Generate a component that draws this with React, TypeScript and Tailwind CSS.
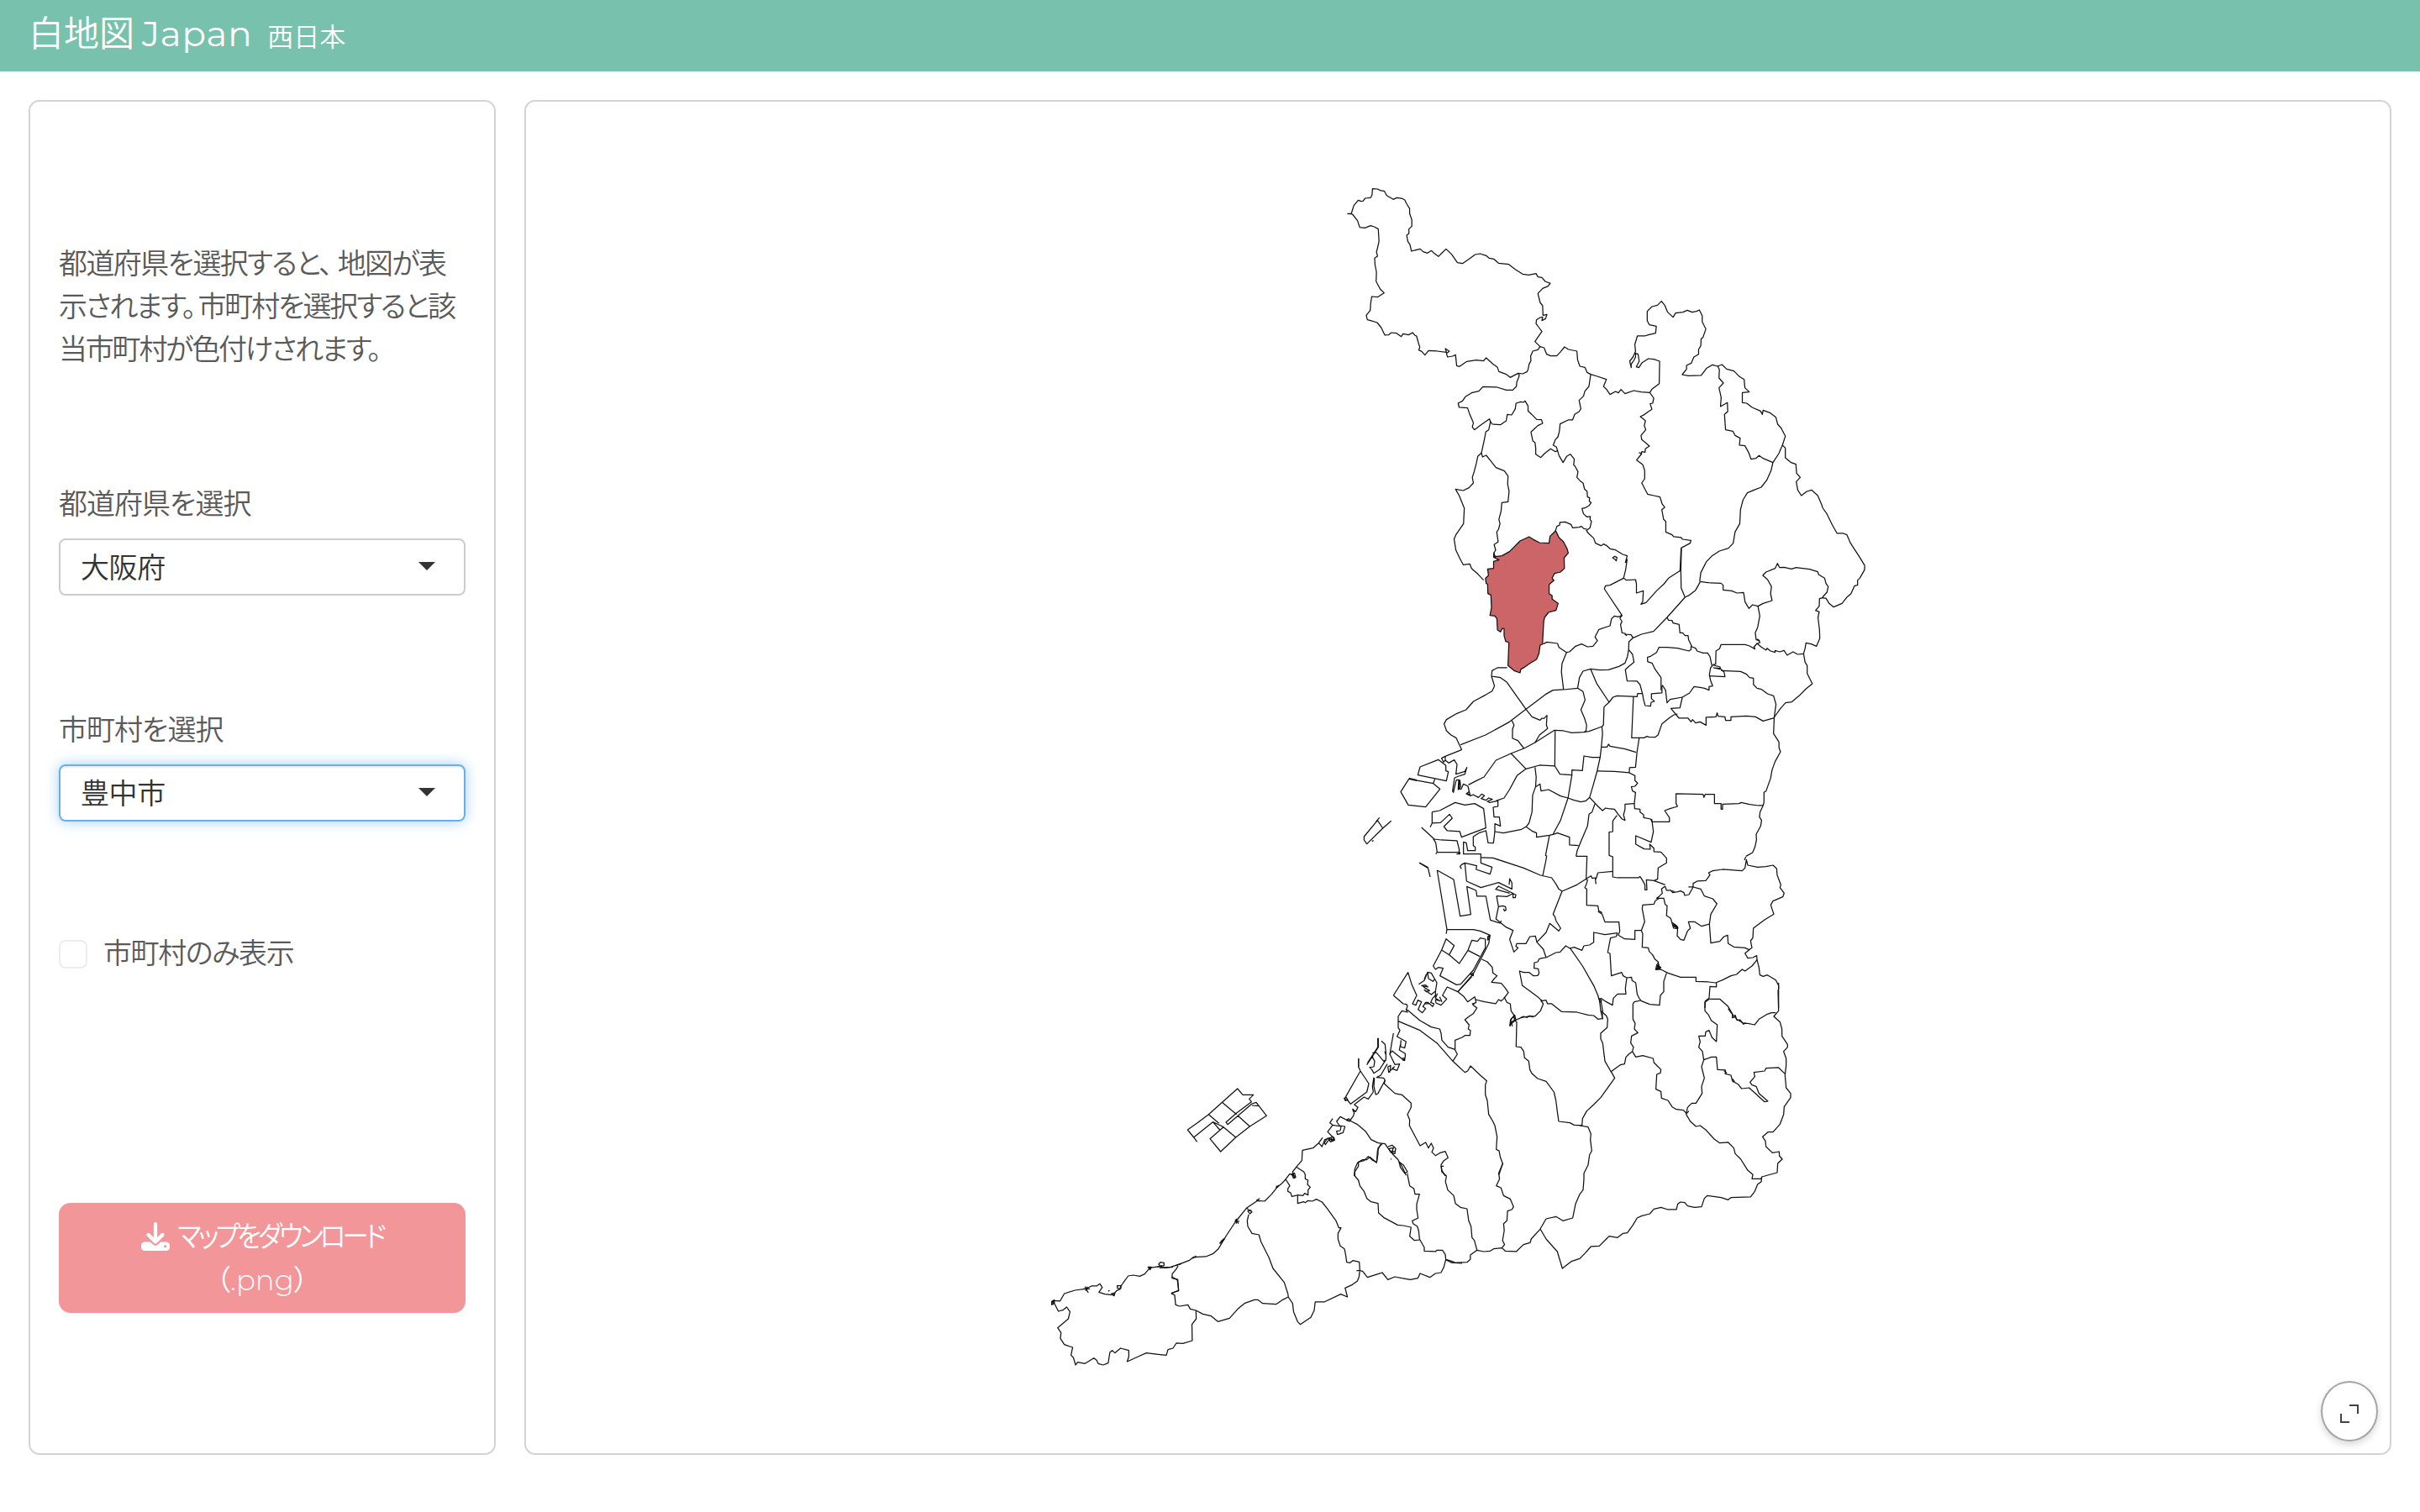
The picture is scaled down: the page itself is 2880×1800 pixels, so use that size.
import type { ReactNode } from "react";
import { FaDownload } from "react-icons/fa6";

type Sheet = { matrix: string; paths: string[] };

/* Survey sheets: each one holds border lines in its own local grid. */
const sheets: Sheet[] = [
  {
    matrix: "matrix(0.43367 0 0 0.33333 1580 200)",
    paths: [
      "M55 163 65 163 68 150 72 134 84 115 92 119 97 118 103 108 118 106 122 96 123 74 137 75 144 80 156 83 162 98 180 112 190 106 205 109 212 115 216 126 225 145 225 162 231 185 231 208 223 218 223 234 217 240 220 262 226 274 230 297 242 293 254 289 262 299 274 304 285 295 290 302 304 316 314 303 325 289 340 308 356 338 370 341 386 327 405 309 418 306 435 313 443 322 456 325 469 340 497 344 515 362 535 379 552 382 572 377 577 389 588 391 597 405 611 412 605 422 590 430 577 448 583 480 590 492 591 526 602 523 598 538 588 545 590 532 583 534 573 542 572 556 580 570 588 584 577 604 569 620 583 638 577 649 563 654 557 672 558 688 553 700 550 720 547 728 535 735 523 733 513 740 501 748 489 736 470 727 466 712 452 698 435 678 428 689 408 686 382 691 362 709 354 706 351 667 343 672 329 675 326 662 334 655 323 645 326 658 300 654 277 652 267 668 258 655 250 650 253 640 249 624 244 600 240 598 233 588 222 596 207 592 202 602 189 590 175 588 167 596 157 597 147 570 136 552 118 545 109 542 106 526 117 508 118 484 121 459 137 461 155 446 144 432 133 405 134 372 130 345 129 322 137 315 134 300 137 285 141 262 139 218 128 210 118 206 102 214 88 212 82 188 68 165Z",
      "M583 638 594 642 601 665 612 671 629 671 640 655 650 639 661 648 684 654 686 685 692 708 706 712 712 730 722 737 740 744 765 755 757 780 765 790 775 809 790 798 798 803 805 791 816 806 840 795 860 800 884 802",
      "M523 733 526 742 519 765 518 780 508 793 490 793 465 783 426 781 415 797 395 803 378 817 370 832 358 840 361 855 384 857 390 880 400 910 397 925 403 935 413 925 421 917 444 896 447 906 442 935 434 942 430 970 422 1018",
      "M447 906 452 915 474 917 490 903 493 880 505 882 515 860 517 840 530 835 537 837 542 832 550 850 550 868 560 880 574 898 587 899 590 912 577 920 558 943 563 975 569 980 571 1000 571 1022 585 1034 595 1020 612 1003 625 1013 631 1010 628 997 619 990 625 970 632 960 636 940 638 914 660 900 672 900 678 880 690 870 695 860 690 830 702 815 706 797 717 780 722 737",
      "M631 1010 635 1027 646 1052 656 1030 666 1022 677 1040 675 1060 679 1065 687 1085 684 1105 695 1120 701 1125 705 1147 712 1155 713 1175 719 1178 718 1190 723 1195 718 1205 708 1213 698 1216 702 1235 711 1246 721 1245 720 1255 724 1262 720 1285 710 1295 716 1305 730 1322 735 1340 750 1349 757 1343 765 1348 775 1360 790 1364 810 1380 822 1385 817 1410",
      "M422 1018 412 1030 408 1055 402 1085 397 1105 400 1125 388 1142 372 1152 351 1147 361 1170 375 1215 373 1270 352 1310 347 1325 352 1365 363 1395 372 1417 390 1414 395 1430 412 1450 428 1472",
      "M422 1018 425 1032 435 1026 447 1045 462 1070 485 1082 495 1100 494 1130 498 1155 495 1192 478 1195 476 1225 470 1255 473 1270 469 1290 464 1300 468 1335 457 1345 461 1365 456 1375 460 1392",
      "M625 1297 629 1280 637 1275 637 1266 652 1264 668 1273 672 1285 690 1283 697 1280 703 1288 712 1290",
      "M884 802 895 822 892 840 885 842 890 862 880 870 870 880 858 888 868 898 872 903 869 920 873 935 860 955 862 970 883 993 872 1003 871 1015 862 1013 860 1020 855 1017 862 1020 848 1043 865 1060 870 1080 870 1110 862 1125 878 1165 895 1170 912 1175 918 1200 925 1212 917 1220 922 1255 928 1262 928 1300 945 1310 950 1317 970 1320 974 1326 997 1330 995 1340 970 1357 967 1440",
      "M884 802 890 790 910 770 911 690 895 683 880 681 863 695 854 713 847 710 855 690 852 665 845 662 845 675 840 688 833 700 833 713 829 690 838 675 845 655 843 630 850 600 870 600 880 596 900 590 902 565 883 560 877 545 877 512 890 495 905 490 916 476 925 490 933 515 948 533 955 518 975 515 987 508 1000 515 1012 512 1020 507 1028 528 1028 550 1038 575 1030 605 1025 610 1024 635 1018 648 1018 665 1005 675 998 697 985 705 985 718 973 738 990 742 1025 741 1040 715 1056 703 1070 708 1082 702 1095 718 1115 725 1130 745 1143 755 1145 785 1157 800 1138 802 1138 838 1150 840 1165 855 1188 868 1193 880 1195 865 1215 875 1230 890 1235 915 1245 930 1256 958 1248 990",
      "M1070 706 1075 720 1074 750 1086 768 1074 785 1080 820 1078 852 1097 838 1098 870 1089 880 1092 935 1112 940 1118 955 1132 965 1130 990 1145 992 1155 1015 1162 1040 1175 1037 1184 1027 1195 1037 1222 1052",
      "M1248 990 1238 1020 1222 1052 1217 1080 1205 1115 1190 1140 1170 1150 1152 1160 1140 1185 1133 1220 1131 1270 1118 1300 1113 1340 1100 1358 1075 1368 1055 1385 1040 1405 1030 1430 1024 1445 1021 1477",
      "M1248 990 1256 1000 1256 1035 1272 1052 1285 1058 1287 1090 1297 1105 1286 1120 1290 1150 1300 1170 1315 1155 1328 1150 1345 1170 1355 1200 1359 1215 1370 1235 1385 1275 1398 1305 1415 1305 1425 1310 1435 1340 1445 1360 1460 1390 1474 1420",
      "M782 1392 788 1387 794 1391 792 1403 788 1397Z",
    ],
  },
  {
    matrix: "matrix(0.35714 0 0 0.33333 1700 580)",
    paths: [
      "M1454 280 1453 295 1440 320 1437 325 1430 332 1430 350 1420 352 1408 380 1395 392 1378 415 1350 428 1335 415 1325 397 1313 395 1303 398 1302 425 1290 440 1302 445 1298 465 1303 510 1304 540 1293 568 1275 560 1258 556 1255 575 1250 595 1255 625 1262 637 1262 665 1279 702 1258 720 1235 745 1210 767 1190 770 1173 790 1152 822",
      "M906 337 940 342 975 343 982 350 982 367 1010 370 1028 378 1050 376 1055 410 1068 433 1080 420 1098 425 1115 415 1145 405 1140 380 1143 355 1130 330 1114 315 1125 303 1155 290 1163 272 1170 287 1185 286 1210 292 1225 287 1270 293 1297 302 1300 312 1320 325 1325 345 1332 355 1328 375 1313 393",
      "M1098 425 1104 460 1097 500 1089 520 1092 545 1103 548 1097 543 1105 555 1095 558 1108 570 1125 582 1128 575 1140 585 1155 590 1155 583 1170 588 1185 583 1195 600 1215 588 1230 597 1250 595",
      "M1095 558 1085 570 1088 578 1070 567 1055 562 975 562 970 577 958 585 957 632 947 635",
      "M906 337 890 368 870 385 855 393 795 465 750 515 710 525 682 538 668 552 667 580 663 605 655 628 635 640 600 652 570 653 540 649 515 657 503 680 497 718",
      "M667 580 680 597 685 625 668 640 656 652 662 692 695 693 705 705 713 737 717 760 722 780 740 782 742 768 753 765 743 755 743 738 778 735 778 710 780 708 790 725 795 770 805 758 846 750",
      "M602 768 615 750 628 745 695 748 697 737 713 737",
      "M846 750 870 735 885 712 905 715 920 718 935 725 935 712 947 710 940 690 936 670 940 645 945 640 938 605 930 592 915 592 895 585 890 575 878 570 867 545 865 530 855 530 847 520 838 520 835 490 815 485 812 476 800 475 795 465",
      "M875 568 875 580 868 585 830 575 795 572 768 572 760 590 738 605 730 607 730 622 735 625 745 628 755 650 775 680 775 725",
      "M947 635 972 642 972 650 950 645 972 647 985 660 988 677 936 674",
      "M975 655 1040 658 1060 668 1070 680 1083 682 1083 705 1095 718 1110 722 1130 738 1150 745 1158 775 1152 822",
      "M846 750 838 788 808 790 835 825 865 825 875 838 880 830 890 842 905 838 925 850 925 822 958 820 962 806 965 818 988 820 990 833 1008 833 1008 820 1060 817 1090 820 1115 835 1152 824",
      "M830 810 818 813 805 822 790 835 778 845 765 885 755 893 735 892 728 890 718 895 702 895 677 895 683 748",
      "M602 768 585 785 583 850 578 855 580 880 576 928 595 928 600 918 605 925 655 935 692 947",
      "M702 897 695 945 690 1000 670 1002 669 1020 620 1015 562 1014",
      "M576 928 572 965 562 1014 550 1060 537 1108 525 1120 508 1124 485 1118 465 1110 440 1103 400 1080 375 1085 372 1060 357 1070",
      "M669 1020 688 1030 688 1048 697 1057 688 1068 676 1070 680 1085 690 1090 686 1130 687 1148 705 1150 705 1160 717 1170 717 1180 740 1185 745 1195 803 1195 803 1180 787 1155 805 1148 830 1140 825 1130 825 1095 915 1097 918 1108 922 1097 953 1097 953 1130 975 1130 975 1150 980 1150 980 1132 1035 1130 1042 1126 1070 1133 1100 1137 1115 1137",
      "M1152 822 1150 880 1168 910 1168 930 1173 945 1155 980 1145 1010 1140 1040 1125 1085 1118 1090 1118 1125 1115 1137 1105 1160 1103 1178 1110 1190 1107 1210 1092 1240 1093 1260 1088 1285 1080 1305 1058 1318",
      "M686 1130 655 1132 655 1150 650 1170 655 1190 645 1185 632 1168 620 1150 600 1148 590 1146 580 1155 565 1140 537 1108",
      "M555 1130 545 1160 535 1168 530 1210 510 1260 495 1300 492 1318",
      "M656 270 662 258 657 295 650 325 660 332 690 330 693 345 693 378 716 370 714 408 708 418 725 412 760 370 785 345 800 325 840 297",
      "M843 220 841 297 842 360 855 393",
      "M650 325 605 350 590 352 586 363 645 458 638 468 645 480 640 490 645 520 655 522 660 530 655 525 675 527 682 538",
      "M645 458 632 463 620 460 610 470 605 495 568 508 555 535 563 548 548 568 530 570 510 560 490 568 470 588 460 590",
      "M382 560 395 553 430 558 435 572 460 590 445 630 443 660 450 722",
      "M262 645 230 645 212 655 210 675 220 710 212 728 190 742 150 765 125 795 95 808 60 830 52 845 60 870 75 885 92 895 111 938",
      "M210 675 240 680 260 695 325 793 345 820 372 832 378 825 385 826 395 815 393 850 397 862 370 885 355 912",
      "M107 920 190 885 270 838 325 793 390 740 415 725 450 723 497 718 515 730 522 760 508 795 520 825 527 850 525 870 518 875",
      "M278 833 285 850 280 865 280 897 298 905 318 933",
      "M133 1063 160 1048 185 1035 225 975 275 951 318 933 355 912 420 868 450 870 478 877 518 875 535 872 578 855",
      "M422 868 421 996 438 1025 478 1028 478 1010 513 1012 518 960 545 965 572 965",
      "M275 951 325 1006 370 993 421 996",
      "M355 1000 359 1035 357 1070 347 1100 345 1160 335 1200 325 1213",
      "M540 649 560 700 602 768",
      "M478 1028 465 1110 440 1190 430 1210 415 1240",
      "M325 1006 295 1030 270 1080 252 1110 225 1120",
      "M325 1213 345 1228 360 1235 360 1250 403 1243 415 1240 430 1235 470 1250 470 1278 500 1280",
      "M325 1213 310 1222 250 1235 220 1230",
    ],
  },
  {
    matrix: "matrix(0.33333 0 0 0.33333 1600 840)",
    paths: [
      "M418 158 358 182 347 188 354 202 360 195 360 182M270 219 335 193 362 214 362 233 371 236 364 269 262 248Z",
      "M360 195 372 205 392 194 402 210 398 245 430 235 437 221 430 245 408 252 393 258 386 305 389 310 398 270 401 265 408 265 406 300 415 290 412 265M411 265 409 298 417 298 425 280 441 288",
      "M441 288 448 318 438 315 444 308 435 315 450 322 460 318 478 328 490 316 500 322 488 332 505 338 515 330 528 335 510 342 518 346 548 340 548 360 531 363 534 398 553 398 557 430 537 422 537 450 532 491 513 490 505 445",
      "M230 262 317 278 341 298 290 362 228 355 201 308ZM230 259 258 266M231 262 258 268M317 278 323 262",
      "M70 468 118 410 137 438 80 494 70 480ZM112 415 125 400M137 438 167 412M98 484 104 482",
      "M275 435 321 477 345 480 402 483 410 515 408 528M317 475 326 490 331 524 412 524 412 530 400 530M331 524 326 530",
      "M313 380 340 375 395 346 430 355 465 350 497 368 505 437 418 470 412 450 367 447 355 432 385 402 375 388 343 418 313 420 306 434M313 380 313 420",
      "M505 447 480 455 460 468 460 500 467 505 467 518 440 518 435 490 425 487 425 530 487 530 487 562 527 577 520 602 470 585 472 572 430 562 418 568 413 575 418 583M430 562 436 627 487 650 550 632 598 655 598 633 590 618 588 640",
      "M487 543 530 544 640 580 700 606 740 615 757 640 765 655 777 663",
      "M605 672 550 645 540 656 590 670M543 680 580 682 600 672 612 675 610 686 602 686 602 674M543 680 550 718 541 762 575 790 602 803 590 835 605 880 620 865 612 860 615 850 648 850 662 825 682 823 687 845 710 870 720 900",
      "M550 718 565 715 575 718 577 730 571 733 568 725",
      "M268 561 298 578 306 612M267 562 297 580",
      "M331 588 390 621 413 752 451 746 437 646 470 660 473 681 505 681 521 766 555 777 560 768",
      "M331 588 366 800 363 815M366 800 460 800 485 805 520 820 515 850 500 880 460 958 405 1022M512 825 516 822 516 835 511 837Z",
      "M363 833 392 857 374 890 410 921 441 874 455 838 475 842 485 830 503 834 503 865 460 945 415 995 400 997 341 965 352 938 335 935 325 942 317 930 347 873ZM347 873 374 890M441 874 483 896",
      "M687 845 720 810 733 778 765 805 772 795 755 768 752 755 745 745 777 663",
      "M777 663 830 640 880 608 885 617 895 615 898 637M898 620 905 597 958 592",
      "M732 463 718 535 722 538 718 560 708 607",
      "M827 538 866 538 863 620 868 623 863 640 858 650 865 655 865 713 905 715 908 733 920 740",
      "M958 592 958 540 945 535 945 452 958 450 958 412 973 392",
      "M720 900 755 882 770 880 790 858 805 867 820 863 848 874 855 858 875 855 890 845 890 810 930 818 975 812",
      "M720 900 705 902 695 905 690 915 678 918 677 938 692 940 695 955 690 964 675 965 660 953 640 953 625 948 635 1000 670 1025 690 1040 705 1055",
      "M805 865 850 930 890 1000 905 1035 912 1060",
    ],
  },
  {
    matrix: "matrix(0.33333 0 0 0.33333 1900 840)",
    paths: [
      "M58 592 58 612 75 615 150 615 155 610 165 625 173 640 173 658 180 658 178 622 205 625 245 640M205 625 218 620 220 580 250 562 250 545 230 523 205 522 205 510 190 495 192 513 170 512 140 495 140 465 195 488 203 450 197 405",
      "M245 645 232 655 235 670 225 680 215 688 240 688 245 710 252 715 250 750 265 760 275 795 290 797 278 785 290 790 288 822 300 835 312 838 325 805 335 795 328 772 350 772 375 788 403 780",
      "M245 645 250 660 265 660 272 668 290 665 300 662 312 668 315 678 330 675 345 648 372 655 385 680 415 690 430 708 408 745 403 780 408 848 440 842 455 825 468 820 470 850 490 862 530 865 545 872 530 885 540 902 558 900 572 893 573 910",
      "M345 648 345 635 360 627 390 625 405 605 400 597 415 590 450 585 480 587 520 590 530 580 535 550 540 570 575 577 605 575 630 570 643 582 645 605 658 640 655 650 670 670 665 683 630 698 622 712 633 745 600 765 560 795 558 830 550 840 555 865 545 872",
      "M225 688 210 697 205 709 165 712 163 725 172 772 160 803 165 815 163 863 185 865 188 878 200 890 208 905 220 915 222 925 212 943 228 942 220 920 225 940 235 945 255 955 300 970 355 970 355 985 400 987 425 990 450 980 480 965 500 960 520 942 530 948 555 930 573 908 580 935 583 962 595 967 610 962 640 980 650 1000 650 1080",
      "M160 803 137 803 137 835 100 833 78 820 83 805 80 773 30 773 20 745 5 735",
      "M75 812 70 825 50 830 45 855 40 882 48 885 53 965 90 953 95 965 108 972 103 1010 105 1030 75 1030 60 1045 57 1070 35 1058 15 1045",
      "M108 972 125 970 127 982 140 990 145 1030 152 1045 160 1055 190 1067 225 1070 228 1035 240 1022 240 985 250 955",
      "M428 990 428 1005 405 1003 402 1045 388 1055 387 1080",
      "M533 540 528 552M270 775 285 785 290 795 278 790 272 782 288 788M218 918 222 935 215 942 230 935 218 930M268 662 278 664M328 648 345 648",
    ],
  },
  {
    matrix: "matrix(0.33333 0 0 0.33333 1580 1080)",
    paths: [
      "M550 186 570 195 588 215 590 235 605 245 595 255 585 268 620 272 635 290 645 305 630 325 620 335 610 330 600 345 560 338 528 330 530 340 518 348 533 360 520 380 505 390 490 402 505 420 502 435 510 440 508 458 490 458 480 465 455 475 455 510 463 525 447 550",
      "M630 320 640 340 652 345 655 370 665 385 668 405 675 410 673 498 690 500 700 515 703 538 718 550 722 580 730 595 750 612 780 622 808 660 815 690 820 730 825 765 865 770 880 778 910 780",
      "M652 425 655 400 665 388 668 402 655 412 660 425M668 405 690 395 715 390 740 390 760 370 770 345 762 335 765 330",
      "M650 425 653 402 668 385 672 402 652 420M515 345 528 342M690 394 700 390 712 394 722 388 735 393",
      "M765 335 780 332 785 345 800 345 835 373 890 375 930 385 950 387 965 400 980 398 982 370 975 330",
      "M283 365 330 405 370 428 400 435 405 450 408 475 430 500 455 508",
      "M252 407 330 440 390 485 447 550 490 590 500 585 510 567 545 600 568 620 563 635 563 670 570 690 575 740 590 765 597 780 605 820 602 865 612 870 617 895 625 915 620 930 612 955",
      "M235 315 287 233 300 275 318 315 303 345 315 350 322 332 335 338 323 365 338 377 350 362 340 355 350 340 358 340 375 355 380 345 368 340 375 325 385 315M345 345 365 345",
      "M235 315 270 345 282 347 285 355 280 365 285 375 265 370 252 390 252 430 258 440 248 462 280 480 275 503 260 498 262 475M260 490 256 510 277 523 277 535 272 547 230 513 222 525 228 490 235 450M267 540 276 540 275 548 268 546Z",
      "M325 275 345 262 357 232 370 235 390 270 385 300 370 312 345 295 352 302 364 298 350 290 340 282 358 285 350 278 334 280M357 232 360 255 376 265 383 255M345 258 352 240",
      "M392 308 385 325 402 335 385 330 387 342 405 350 425 328 410 315 427 285 465 302 485 318 500 338 525 320 528 330M400 320 408 338M385 300 385 325",
      "M465 302 515 248M510 240 520 235 520 245Z",
      "M222 525 240 562 257 560 248 583 230 577 238 570 218 590 215 570 225 565 222 590",
      "M181 467 181 500 140 563M179 467 179 500 142 557M192 478 205 490 208 520 208 545 200 550 175 520 160 520M204 515 207 525M166 520 160 535 168 550 165 570 150 572 158 580 165 593 185 580 208 545",
      "M111 540 111 572 117 585 147 630 140 660 82 703 72 690 60 685 117 585M110 540 110 572M59 682 67 680 72 688 63 691Z",
      "M95 705 130 678 145 685 163 660 160 640 165 608M172 670 165 640 167 610M172 670 180 665 205 618 200 610 175 608 190 600 213 560",
      "M205 618 202 630 215 642 240 665 265 670 298 700 298 715 285 740 293 760 292 780 305 805 330 852 350 840 360 860 370 843 378 860 372 875 385 887 400 878 420 872 430 895 415 905 405 920 408 940 420 960",
      "M95 705 108 715 100 730 90 725 95 735 92 745 85 755 78 765 68 760 75 755 85 765 105 775 135 800 155 830 180 842 205 845 215 860 235 885 250 900 265 925 280 958",
      "M215 855 230 850 243 862 240 880 225 875 218 862 235 860 228 875 243 868M255 910 270 920 285 945 275 950 260 930Z",
      "M195 845 180 860 180 880 175 912 150 892 140 902 125 902 107 912 97 935 95 960",
    ],
  },
  {
    matrix: "matrix(0.33333 0 0 0.33333 1880 1080)",
    paths: [
      "M218 333 195 338 190 345 190 400 198 415 195 435 208 448 195 455 185 460 182 485 192 500 188 515",
      "M463 328 447 340 447 370 460 385 470 405 491 420 488 480 472 465 462 440 450 445 448 460 425 460 430 480 425 500 438 515 443 545 470 535 488 535 492 580 520 582 520 595 540 600 545 620 565 632 578 648 605 645 660 695 672 693 640 665 630 640 615 635 608 625 625 605 622 590 660 585 665 575 710 573 733 595",
      "M463 328 500 328 530 355 540 372 550 390 555 385 560 400 585 415 600 415 625 420 640 400 670 382 685 377 700 377",
      "M530 362 538 374 545 382 545 395 555 392 562 404 572 402 585 418 592 412M515 584 524 590 518 596M545 612 552 622 545 624",
      "M710 270 710 290 708 300 710 370 693 390 715 410 722 435 722 460 742 490 742 500 728 515 737 540 737 565 733 600 737 645 753 665 753 680 730 713 728 740 715 775 690 803 672 803 653 820 663 835 665 855 688 877 712 873 713 888 723 900 707 915 705 948 650 963 648 970 615 970 618 955 600 940 575 900 555 880 550 860 530 840 500 842 480 828 450 795 430 780 415 783 395 765 380 740 385 715 400 700 415 700 437 665 435 640 445 610 435 570 443 545",
      "M188 515 200 535 225 530 262 540 265 555 290 580 288 592 275 597 272 650 290 658 292 682 315 690 330 713 345 722 370 725 380 735",
      "M188 515 175 525 165 535 160 560 145 563 112 587 125 610 75 680 50 705 25 728 10 755 8 780",
      "M70 325 75 370 95 388 100 400 98 430 75 450 75 470 82 485 90 550 112 588",
      "M72 325 78 335 70 340M75 370 82 400",
      "M650 963 648 980 635 990 625 1015 610 1035 540 1037 530 1045 505 1037 455 1030 445 1040 435 1070 410 1072 385 1067 375 1055 360 1053 350 1060 345 1080 315 1080 290 1072 265 1078 250 1095 220 1103 205 1110 190 1135 170 1163 155 1165 135 1180 105 1175 95 1185 70 1210 40 1212 20 1235 0 1255 -30 1265 -62 1290 -80 1230 -120 1185 -141 1149",
      "M0 780 30 785 40 810 38 830 43 870 35 885 30 920 15 950 15 970 12 1010 0 1025 -15 1060 -25 1110 -60 1120 -85 1105 -120 1113 -141 1149",
      "M390 728 380 738M275 205 285 218 272 220Z",
    ],
  },
  {
    matrix: "matrix(0.33333 0 0 0.33333 1380 1240)",
    paths: [
      "M100 315 135 290 175 260 278 168 297 190 335 190 320 205 328 215 275 255 237 288 243 296 330 222 345 217 382 265 322 303 272 342 218 393 180 347 228 305 218 300 190 287 122 342ZM122 342 134 358M225 218 275 260M279 264 322 303M175 260 212 292M228 305 272 342M190 287 215 315M330 228 355 230 345 218",
      "M672 282 645 268 632 285 642 300 662 303 655 325 635 332 632 320 645 318 648 303 618 298 600 322 622 345M618 275 608 290 618 298",
      "M790 365 778 390 775 432 758 422 745 410 730 425 710 430 710 445 697 465 697 480 710 495 715 515 730 535 740 560 755 572 780 578 782 612 800 628 850 655 870 657 898 663 893 695 910 710 930 708",
      "M885 470 885 475 893 515 908 525 912 545 928 545 918 580 918 600 923 630 902 640 905 650 920 660 925 675 928 705 945 735 945 748 985 750 990 745 1010 745 1020 760 1022 778 1045 785 1055 790 1080 792",
      "M582 343 568 362 580 375 590 350 605 345M568 362 548 380 510 388 508 425 488 448 475 465 480 480 465 472 450 492 435 508 420 520 400 545 375 570 350 568 310 595 270 645 240 690 210 740 190 758 165 768 120 770 105 782 65 797 40 805 0 808",
      "M588 362 600 345 605 350 592 368ZM603 345 620 340 625 352 610 358ZM607 350 622 348M612 342 616 358M472 472 482 470 486 485 478 488ZM474 470 484 488M268 642 285 642M270 635 282 650M275 632 274 650M215 722 232 705M218 715 230 703M214 720 225 712M118 775 130 765M120 770 132 770M57 800 78 793M345 568 358 560M347 565 357 570M415 522 426 513M416 515 424 520M666 280 680 284M688 240 698 248M605 346 618 354 624 346 612 352",
      "M488 448 515 465 520 475 520 490 530 495 528 510 538 520 530 530 530 548 518 542 512 550 495 548 472 553 468 540 458 535 458 525 465 515 450 492",
      "M493 550 493 578 515 572 520 575 530 568 545 570 560 563 580 573 600 598 630 640 640 665 648 665 637 685 637 705 645 730 660 740 665 765 668 788 680 790 690 782 713 787 715 818 703 818",
      "M310 595 325 605 330 608 322 615 315 605 328 602M318 618 313 640 315 660 330 685 355 690 362 715 390 770 405 810 445 860 458 900",
      "M66 800 60 812 45 830 45 845 65 850 68 890 42 898",
      "M715 818 725 820 742 842 780 830 795 825 815 850 840 840 865 845 895 850 922 845 930 828 965 842 985 828 1005 825 1015 805 1022 778",
      "M825 420 828 420",
    ],
  },
  {
    matrix: "matrix(0.39541 0 0 0.33333 1220 1340)",
    paths: [
      "M83 625 88 635 100 663 115 658 125 648 135 665 130 690 98 722 108 740 106 760 118 782 125 785 143 792 138 820 145 828 152 855 158 845 180 850 207 830 215 838 220 850 235 855 250 848 255 810 262 803 270 812 287 795 312 803 312 825 307 843 340 825 365 812 400 817 425 820 430 800 445 795 455 777 475 778 503 768 502 710 515 690 514 660 497 655 490 640 465 645 453 640 450 605 440 600 462 588 458 550 440 540",
      "M514 660 535 673 560 680 580 700 615 688 640 655 660 635 690 622 700 622 715 635 755 638 775 622 792 612 805 635 808 665 820 700 828 710 860 685 870 660 873 630 900 630 950 602 970 612 963 580 985 568 1000 555 1005 540 1007 520M791 600 792 612",
      "M83 625 105 627 118 600 150 588 182 583 200 573 215 573 225 565 232 578 222 595 240 602 265 605 275 590 285 585 290 570 310 537 325 534 345 538 360 530 375 508 405 503 420 508 445 505",
      "M80 628 88 623 88 633 80 640ZM82 625 85 640M175 583 195 583M180 575 190 597M187 575 182 590M277 572 288 572 288 582 278 582ZM370 505 380 505 376 515ZM402 495 407 488 418 490 418 500 408 503ZM260 600 270 597 268 608ZM250 592 254 588M398 505 412 500",
      "M1265 478 1285 490 1330 488 1340 478 1340 462 1360 445 1380 450 1400 448 1410 440 1435 437 1445 448 1478 450 1500 425 1520 418 1523 405 1550 370",
      "M1260 145 1252 145 1254 165 1268 180 1265 200 1272 230 1290 250 1295 278 1310 292 1330 297 1335 340 1342 360 1345 400 1352 410 1360 445",
      "M1438 135 1425 170 1428 190 1418 215 1432 222 1440 250 1460 262 1470 290 1465 300 1452 305 1450 340 1440 350 1442 375 1437 410 1443 425 1435 437",
    ],
  },
];

const highlighted =
  "M335 177 350 187 370 198 402 200 405 175 415 165 424 155 435 180 450 195 462 220 466 235 452 252 453 290 440 303 420 308 412 325 418 333 408 342 402 348 402 380 412 387 412 400 432 415 425 440 400 447 387 465 384 480 380 560 372 565 368 595 360 615 340 628 320 643 308 650 305 663 285 655 265 637 268 555 257 550 252 530 252 505 246 504 240 517 230 510 228 470 222 460 205 458 210 430 208 385 198 380 197 347 192 343 190 325 200 315 197 292 217 290 217 265 235 260 217 250 218 235 222 248 245 245 270 230 305 192Z";

function OsakaMap() {
  return (
    <svg viewBox="626 121 2218 1609" className="h-full w-full" fill="none" stroke="#111" strokeWidth={1.25} strokeLinejoin="round">
      <g transform="matrix(0.35714 0 0 0.33333 1700 580)">
        <path d={highlighted} fill="#cb6568" vectorEffect="non-scaling-stroke" />
      </g>
      {sheets.map((s) => (
        <g key={s.matrix} transform={s.matrix}>
          {s.paths.map((d) => (
            <path key={d} d={d} vectorEffect="non-scaling-stroke" />
          ))}
        </g>
      ))}
    </svg>
  );
}

function Field({ label, value, focused }: { label: string; value: ReactNode; focused?: boolean }) {
  return (
    <div className="flex h-[134px] flex-col justify-between">
      <div className="h-[51px] whitespace-nowrap leading-[51px] tracking-[-1px]">{label}</div>
      <div
        className={
          focused
            ? "flex h-[68px] items-center justify-between rounded-[8px] border-2 border-[#66afe9] pl-[24px] pr-[34px] text-[#333] shadow-[inset_0_2px_2px_rgba(0,0,0,0.075),0_0_16px_rgba(102,175,233,0.6)]"
            : "flex h-[68px] items-center justify-between rounded-[8px] border-2 border-[#ccc] pl-[24px] pr-[34px] text-[#333]"
        }
      >
        <span className="pt-[2px] tracking-[-0.4px]">{value}</span>
        <span className="mb-[3px] h-0 w-0 border-x-[10px] border-t-[10px] border-x-transparent border-t-[#333]" />
      </div>
    </div>
  );
}

export default function App() {
  return (
    <div className="flex h-[1800px] w-[2880px] flex-col bg-white font-['Montserrat','Inter','Noto_Sans_CJK_JP',sans-serif] text-[34px] font-[350] text-[#5a5a5a] [font-feature-settings:'palt']">
      <header className="flex h-[85px] shrink-0 items-baseline bg-[#78c2ad] pl-[34px] text-white">
        <h1 className="text-[42px] font-[350] leading-[80px]">
          白地図<span className="ml-[9px] font-normal tracking-[0.8px]">Japan</span>
        </h1>
        <span className="ml-[18px] text-[31px]">西日本</span>
      </header>

      <main className="mt-[34px] flex h-[1613px] gap-[34px] px-[34px]">
        <aside className="flex w-[556px] shrink-0 flex-col rounded-[13px] border-2 border-[#d3d3d3] px-[34px]">
          <p className="mt-[168px] whitespace-nowrap leading-[51px]">
            <span className="block tracking-[-1.6px]">
              都道府県を選択すると<span className="mr-[7px]">、</span>地図が表
            </span>
            <span className="block tracking-[-2.1px]">
              示されます<span className="mr-[4px]">。</span>市町村を選択すると該
            </span>
            <span className="block tracking-[-2.2px]">当市町村が色付けされます。</span>
          </p>
          <div className="mt-[133px]">
            <Field label="都道府県を選択" value="大阪府" />
          </div>
          <div className="mt-[135px]">
            <Field label="市町村を選択" value="豊中市" focused />
          </div>
          <label className="mt-[132px] flex h-[51px] items-center gap-[19px] whitespace-nowrap leading-[51px]">
            <span className="h-[34px] w-[34px] rounded-[8px] border-2 border-[#eceeec]" />
            <span className="tracking-[-1.4px]">市町村のみ表示</span>
          </label>
          <button className="mt-[271px] flex h-[131px] flex-col items-center justify-center rounded-[14px] bg-[#f3969a] leading-[52px] text-white">
            <span className="flex items-center gap-[9px] whitespace-nowrap tracking-[-4.2px]">
              <FaDownload className="h-[34px] w-[34px]" />
              <span className="-mx-[9px] inline-block scale-x-[0.93] px-0">マップをダウンロード</span>
            </span>
            <span>（.png）</span>
          </button>
        </aside>

        <section className="relative min-w-0 flex-1 rounded-[13px] border-2 border-[#d3d3d3]">
          <OsakaMap />
          <button className="absolute bottom-[14px] right-[14px] flex h-[72px] w-[68px] items-center justify-center rounded-[50%] border-2 border-[#a5a5a5] bg-white shadow-[0_4px_8px_rgba(0,0,0,0.15)]">
            <svg width="24" height="24" viewBox="0 0 24 24" fill="none" stroke="#444" strokeWidth="2" className="mt-[5px]">
              <path d="M12 2H22V12M2 12V22H12" />
            </svg>
          </button>
        </section>
      </main>
    </div>
  );
}
